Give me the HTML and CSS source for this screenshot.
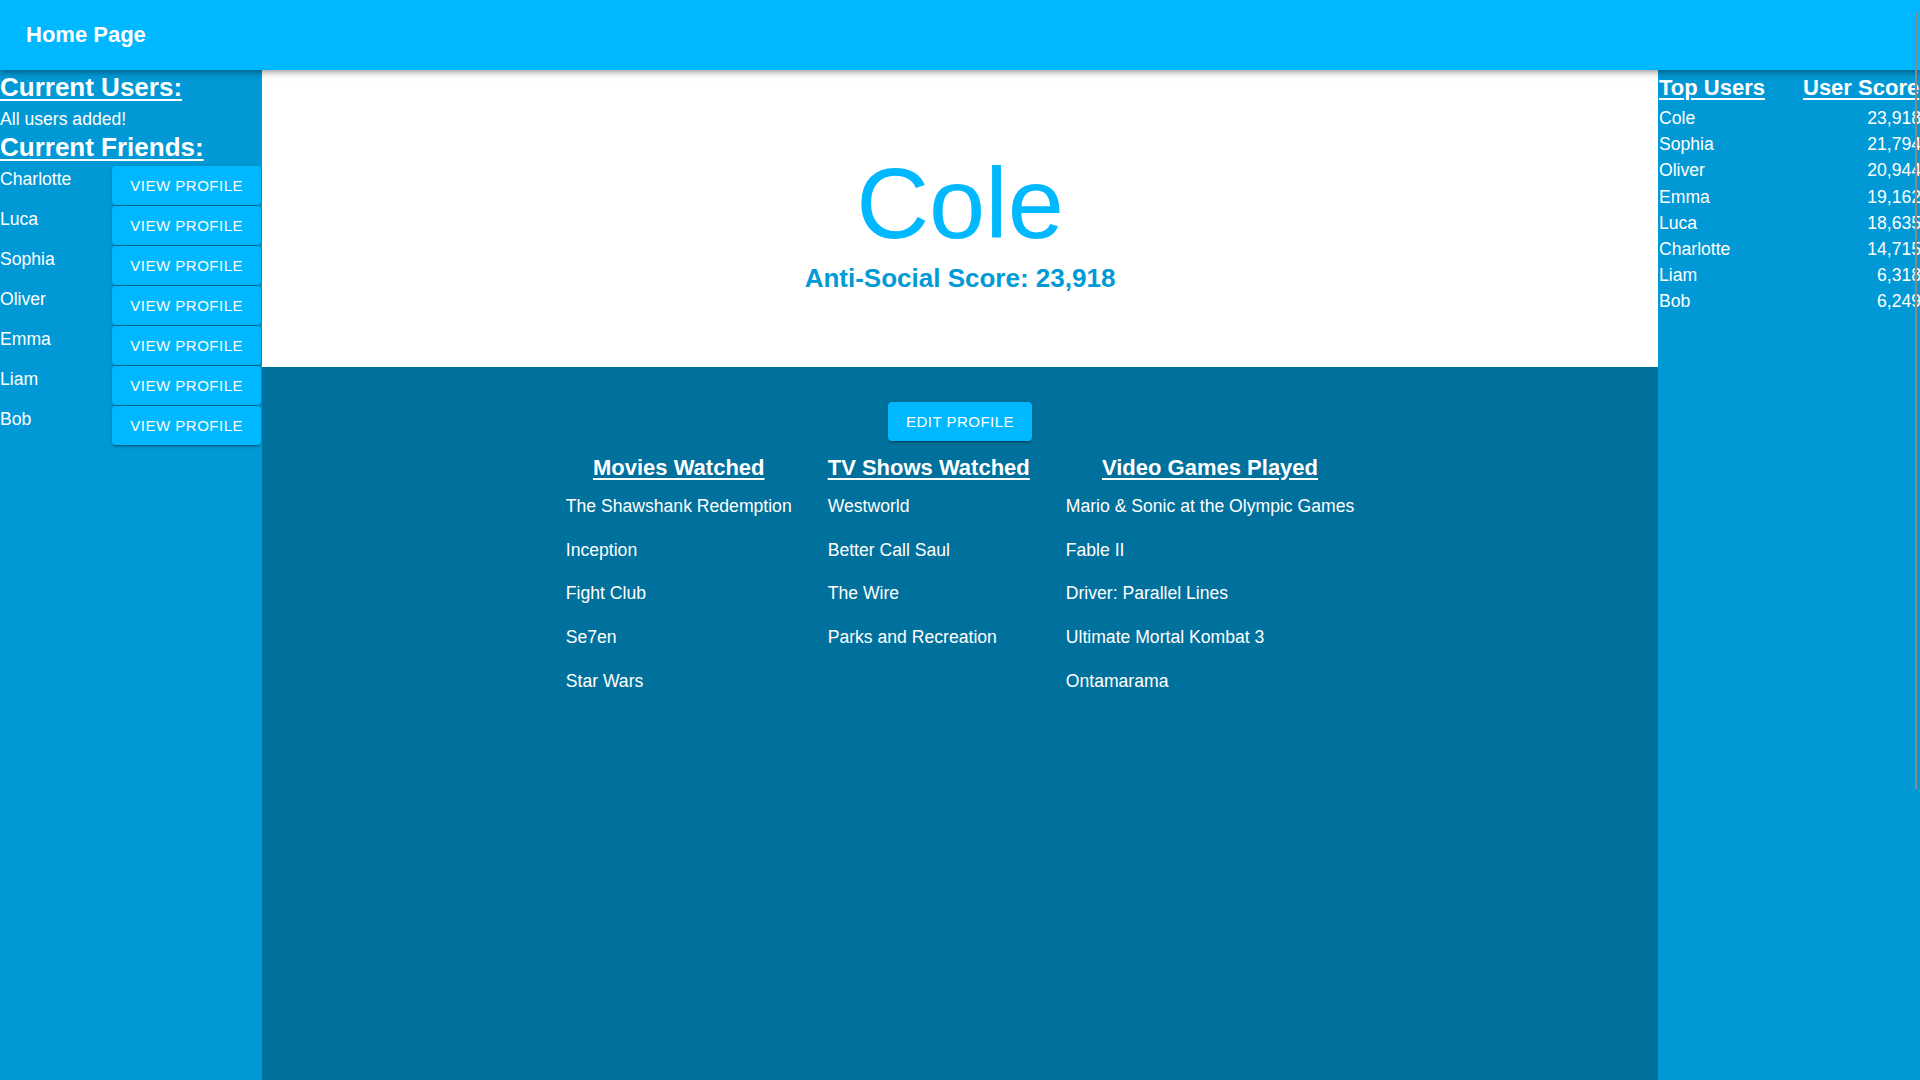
FILE: index.html
```html
<!DOCTYPE html>
<html lang="en">
<head>
<meta charset="utf-8">
<title>Home Page</title>
<link rel="stylesheet" href="styles.css">
</head>
<body>
<header class="app-bar">
  <h1 class="app-title">Home Page</h1>
</header>
<div class="layout">
  <aside class="side side-left">
    <h2 class="side-title">Current Users:</h2>
    <p class="side-note">All users added!</p>
    <h2 class="side-title">Current Friends:</h2>
    <ul class="friends">
      <li class="friend"><span class="friend-name">Charlotte</span><button class="btn">VIEW PROFILE</button></li>
      <li class="friend"><span class="friend-name">Luca</span><button class="btn">VIEW PROFILE</button></li>
      <li class="friend"><span class="friend-name">Sophia</span><button class="btn">VIEW PROFILE</button></li>
      <li class="friend"><span class="friend-name">Oliver</span><button class="btn">VIEW PROFILE</button></li>
      <li class="friend"><span class="friend-name">Emma</span><button class="btn">VIEW PROFILE</button></li>
      <li class="friend"><span class="friend-name">Liam</span><button class="btn">VIEW PROFILE</button></li>
      <li class="friend"><span class="friend-name">Bob</span><button class="btn">VIEW PROFILE</button></li>
    </ul>
  </aside>
  <main class="main">
    <section class="profile-head">
      <div class="profile-name">Cole</div>
      <div class="profile-score">Anti-Social Score: 23,918</div>
    </section>
    <section class="profile-body">
      <button class="btn btn-edit">EDIT PROFILE</button>
      <div class="lists">
        <div class="list-col">
          <h3 class="list-title">Movies Watched</h3>
          <ul class="list">
            <li>The Shawshank Redemption</li>
            <li>Inception</li>
            <li>Fight Club</li>
            <li>Se7en</li>
            <li>Star Wars</li>
          </ul>
        </div>
        <div class="list-col">
          <h3 class="list-title">TV Shows Watched</h3>
          <ul class="list">
            <li>Westworld</li>
            <li>Better Call Saul</li>
            <li>The Wire</li>
            <li>Parks and Recreation</li>
          </ul>
        </div>
        <div class="list-col">
          <h3 class="list-title">Video Games Played</h3>
          <ul class="list">
            <li>Mario &amp; Sonic at the Olympic Games</li>
            <li>Fable II</li>
            <li>Driver: Parallel Lines</li>
            <li>Ultimate Mortal Kombat 3</li>
            <li>Ontamarama</li>
          </ul>
        </div>
      </div>
    </section>
  </main>
  <aside class="side side-right">
    <table class="scores">
      <thead>
        <tr><th class="col-user">Top Users</th><th class="col-score">User Score</th></tr>
      </thead>
      <tbody>
        <tr><td>Cole</td><td class="num">23,918</td></tr>
        <tr><td>Sophia</td><td class="num">21,794</td></tr>
        <tr><td>Oliver</td><td class="num">20,944</td></tr>
        <tr><td>Emma</td><td class="num">19,162</td></tr>
        <tr><td>Luca</td><td class="num">18,635</td></tr>
        <tr><td>Charlotte</td><td class="num">14,715</td></tr>
        <tr><td>Liam</td><td class="num">6,318</td></tr>
        <tr><td>Bob</td><td class="num">6,249</td></tr>
      </tbody>
    </table>
  </aside>
</div>
<div class="scroll-indicator"></div>
</body>
</html>
```

FILE: styles.css
```css
html, body {
  margin: 0;
  padding: 0;
  height: 100%;
  overflow: hidden;
}

body {
  font-family: "Liberation Sans", Arial, sans-serif;
  color: #fff;
  background: #0099d5;
  position: relative;
}

.app-bar {
  position: relative;
  z-index: 2;
  height: 70px;
  background: #00b8ff;
  display: flex;
  align-items: center;
  padding-left: 26px;
  box-shadow: 0 2px 4px -1px rgba(0,0,0,0.2), 0 4px 5px 0 rgba(0,0,0,0.14), 0 1px 10px 0 rgba(0,0,0,0.12);
}

.app-title {
  margin: 0;
  font-size: 22px;
  font-weight: bold;
  line-height: 26px;
}

.layout {
  display: grid;
  grid-template-columns: 262px 1fr 262px;
  height: 1010px;
}

.side {
  background: #0099d5;
  overflow: hidden;
}

.side-left {
  padding-right: 1px;
  padding-top: 2px;
}

.side-title {
  margin: 0;
  font-size: 26px;
  line-height: 31px;
  font-weight: bold;
  text-decoration: underline;
  text-underline-offset: 3px;
}

.side-note {
  margin: 6px 0 3px;
  font-size: 17.6px;
  line-height: 20px;
}

.friends {
  list-style: none;
  margin: 3px 0 0;
  padding: 0;
}

.friend {
  display: flex;
  justify-content: space-between;
  align-items: flex-start;
  height: 40px;
}

.friend-name {
  font-size: 17.6px;
  line-height: 26px;
}

.btn {
  font-family: "Liberation Sans", Arial, sans-serif;
  font-size: 15px;
  letter-spacing: 0.5px;
  color: #fff;
  background: #00b8ff;
  border: none;
  border-radius: 4px;
  height: 39px;
  padding: 0 18px;
  box-shadow: 0 3px 1px -2px rgba(0,0,0,0.2), 0 2px 2px 0 rgba(0,0,0,0.14), 0 1px 5px 0 rgba(0,0,0,0.12);
  cursor: pointer;
}

.main {
  display: flex;
  flex-direction: column;
}

.profile-head {
  height: 297px;
  background: #fff;
  text-align: center;
  padding-top: 82.5px;
  box-sizing: border-box;
}

.profile-name {
  font-size: 101px;
  line-height: 101px;
  color: #00b8ff;
}

.profile-score {
  margin-top: 9.5px;
  font-size: 26px;
  line-height: 30px;
  font-weight: bold;
  color: #009ad6;
}

.profile-body {
  flex: 1;
  background: #00719d;
  display: flex;
  flex-direction: column;
  align-items: center;
}

.btn-edit {
  margin-top: 35px;
}

.lists {
  display: flex;
  justify-content: center;
  gap: 36px;
  margin-top: 12px;
}

.list-col {
  display: flex;
  flex-direction: column;
}

.list-title {
  margin: 1.5px 0 3.5px;
  font-size: 22px;
  line-height: 26px;
  font-weight: bold;
  text-align: center;
  text-decoration: underline;
  text-underline-offset: 3px;
}

.list {
  list-style: none;
  margin: 0;
  padding: 0;
}

.list li {
  font-size: 17.6px;
  line-height: 20px;
  padding: 11.9px 0;
  white-space: nowrap;
}

.side-right {
  padding-left: 1px;
  padding-top: 1px;
}

.scores {
  border-collapse: collapse;
  table-layout: fixed;
  width: 262px;
}

.scores th {
  padding: 0;
  font-size: 22px;
  line-height: 34px;
  font-weight: bold;
  text-align: left;
  text-decoration: underline;
  text-underline-offset: 3px;
  white-space: nowrap;
}

.scores .col-user {
  width: 144px;
}

.scores .col-score {
  width: 118px;
}

.scores td {
  padding: 0;
  font-size: 17.6px;
  line-height: 26.2px;
  white-space: nowrap;
}

.scores td.num {
  text-align: right;
}

.scroll-indicator {
  position: absolute;
  left: 1915px;
  top: 12px;
  width: 2px;
  height: 777px;
  background: #888;
  z-index: 3;
}
```
